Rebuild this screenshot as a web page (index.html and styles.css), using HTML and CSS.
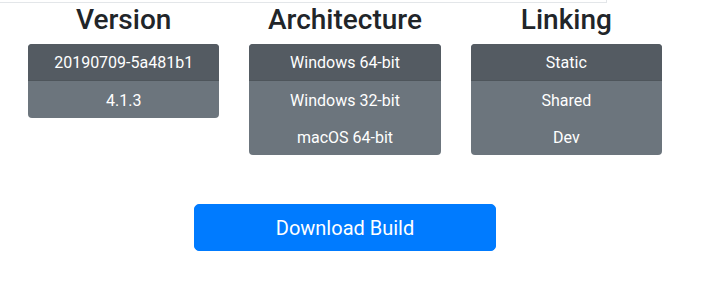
FILE: index.html
```html
<!DOCTYPE html>
<html lang="en">
  <head>
    <meta charset="UTF-8" />
    <meta name="viewport" content="width=device-width, initial-scale=1.0" />
    <title>Build</title>
    <link rel="stylesheet" href="styles.css">
  </head>
  <body>
    <div class="topbar"></div>
    <div class="container">
      <div class="options">
        <div class="option">
          <h3>Version</h3>
          <div class="group">
            <div class="item active">20190709-5a481b1</div>
            <div class="item">4.1.3</div>
          </div>
        </div>
        <div class="option">
          <h3>Architecture</h3>
          <div class="group">
            <div class="item active">Windows 64-bit</div>
            <div class="item">Windows 32-bit</div>
            <div class="item">macOS 64-bit</div>
          </div>
        </div>
        <div class="option">
          <h3>Linking</h3>
          <div class="group">
            <div class="item active">Static</div>
            <div class="item">Shared</div>
            <div class="item">Dev</div>
          </div>
        </div>
      </div>
      <div class="actions">
        <button class="download">Download Build</button>
      </div>
    </div>
  </body>
</html>
```

FILE: styles.css
```css
body {
  margin: 0;
  font-family: Roboto, "Liberation Sans", Arial, sans-serif;
  color: #212529;
  background: #fff;
}
.topbar {
  width: 606px;
  height: 2px;
  border-bottom: 1px solid #e3e6e9;
  border-right: 1px solid #e3e6e9;
}
.container {
  width: 634px;
  margin-left: 28px;
}
.options {
  display: grid;
  grid-template-columns: repeat(3, 1fr);
  column-gap: 30px;
  align-items: start;
}
.option h3 {
  margin: 0 0 7px 0;
  font-size: 28px;
  font-weight: 500;
  line-height: 34px;
  text-align: center;
}
.group {
  border-radius: 4px;
  overflow: hidden;
  background-color: #6c757d;
}
.item {
  height: 37px;
  line-height: 39px;
  text-align: center;
  color: #fff;
  font-size: 16px;
}
.item.active {
  background-color: #545b62;
  border-bottom: 1px solid #4e555b;
  height: 36px;
  line-height: 38px;
}
.actions {
  display: flex;
  justify-content: center;
  margin-top: 49px;
}
.download {
  width: 302px;
  height: 47px;
  border: 1px solid #007bff;
  border-radius: 5px;
  background-color: #007bff;
  color: #fff;
  font-family: Roboto, "Liberation Sans", Arial, sans-serif;
  font-size: 20px;
  padding: 0;
}
```
